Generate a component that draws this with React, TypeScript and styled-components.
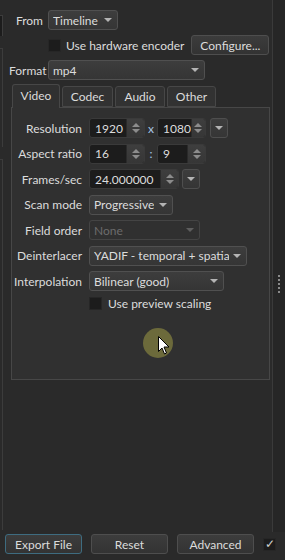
import styled, { createGlobalStyle } from 'styled-components';

const GlobalStyle = createGlobalStyle`
  html, body {
    margin: 0;
    padding: 0;
    background: #2a2a2a;
  }
  body {
    font-family: Lato, "Noto Sans", sans-serif;
    font-size: 12px;
    color: #dcdcdc;
  }
`

const Screen = styled.div`
  width: 285px;
  height: 560px;
  display: flex;
  flex-direction: column;
  background: #2a2a2a;
  position: relative;
  overflow: hidden;
  white-space: nowrap;
`

const Body = styled.div`
  flex: 1;
  display: flex;
`

const LeftStrip = styled.div`
  width: 3px;
  display: flex;
  flex-direction: column;
  padding-top: 15px;
  gap: 12px;
`

const StripPiece = styled.div<{ $h: number; $dark?: boolean }>`
  height: ${p => p.$h}px;
  border-right: 1px solid #3c3c3c;
  border-top: 1px solid #3c3c3c;
  background: ${p => (p.$dark ? '#1c1c1c' : 'transparent')};
`

const Main = styled.div`
  flex: 1;
  display: flex;
  flex-direction: column;
  padding: 10px 0 0 6px;
`

const RightStrip = styled.div`
  width: 12px;
  border-left: 1px solid #3a3a3a;
  background: #262626;
  display: flex;
  flex-direction: column;
  align-items: center;
  padding-top: 275px;
  gap: 2px;
`

const Dot = styled.div`
  width: 2px;
  height: 2px;
  background: #8a8a8a;
`

const Row = styled.div<{ $indent?: number; $mt?: number }>`
  display: flex;
  align-items: center;
  gap: 5px;
  padding-left: ${p => p.$indent ?? 0}px;
  margin-top: ${p => p.$mt ?? 0}px;
`

const TopLabel = styled.span`
  width: 34px;
  text-align: right;
`

const Combo = styled.div<{ $w: number; $disabled?: boolean }>`
  width: ${p => p.$w}px;
  height: 20px;
  box-sizing: border-box;
  border: 1px solid #505050;
  border-radius: 3px;
  background: linear-gradient(#3d3d3d, #353535);
  display: flex;
  align-items: center;
  justify-content: space-between;
  padding: 0 5px 0 4px;
  color: ${p => (p.$disabled ? '#6c6c6c' : '#dcdcdc')};
  ${p => p.$disabled && 'background: #303030; border-color: #444;'}
  overflow: hidden;
`

const ComboText = styled.span`
  overflow: hidden;
`

const Arrow = styled.span<{ $dim?: boolean }>`
  flex: none;
  margin-left: 4px;
  width: 0;
  height: 0;
  border-left: 4px solid transparent;
  border-right: 4px solid transparent;
  border-top: 4px solid ${p => (p.$dim ? '#5e5e5e' : '#b4b4b4')};
`

const Check = styled.div`
  width: 13px;
  height: 13px;
  box-sizing: border-box;
  background: #1c1c1c;
  border: 1px solid #262626;
  display: flex;
  align-items: center;
  justify-content: center;
  color: #cfcfcf;
  font-size: 12px;
  line-height: 1;
`

const Button = styled.div<{ $w: number; $focus?: boolean }>`
  width: ${p => p.$w}px;
  height: 20px;
  box-sizing: border-box;
  border: 1px solid ${p => (p.$focus ? '#3e6c80' : '#4e4e4e')};
  border-radius: 3px;
  background: linear-gradient(#3c3c3c, #333);
  display: flex;
  align-items: center;
  justify-content: center;
`

const Tabs = styled.div`
  display: flex;
  align-items: flex-end;
  gap: 2px;
  margin-top: 3px;
  padding-left: 3px;
  height: 24px;
`

const Tab = styled.div<{ $active?: boolean; $w: number }>`
  width: ${p => p.$w}px;
  height: ${p => (p.$active ? 24 : 21)}px;
  box-sizing: border-box;
  border: 1px solid #474747;
  border-bottom: ${p => (p.$active ? 'none' : '1px solid #474747')};
  border-radius: 3px 3px 0 0;
  background: ${p => (p.$active ? '#303030' : '#323232')};
  display: flex;
  align-items: center;
  justify-content: center;
  padding-bottom: ${p => (p.$active ? 2 : 0)}px;
  position: relative;
  z-index: ${p => (p.$active ? 1 : 0)};
  margin-bottom: ${p => (p.$active ? -1 : 0)}px;
`

const Panel = styled.div`
  margin-left: 2px;
  width: 259px;
  height: 273px;
  box-sizing: border-box;
  border: 1px solid #474747;
  background: #303030;
  display: grid;
  grid-template-columns: 70px 1fr;
  grid-auto-rows: 20px;
  column-gap: 7px;
  row-gap: 5.5px;
  align-content: start;
  align-items: center;
  padding-top: 10px;
`

const FieldLabel = styled.span`
  text-align: right;
`

const Controls = styled.div<{ $mt?: number }>`
  display: flex;
  align-items: center;
  gap: 3px;
  margin-top: ${p => p.$mt ?? 0}px;
`

const Spin = styled.div<{ $w: number }>`
  width: ${p => p.$w}px;
  height: 20px;
  box-sizing: border-box;
  border: 1px solid #3a3a3a;
  border-radius: 3px;
  background: #1c1c1c;
  display: flex;
  overflow: hidden;
`

const SpinValue = styled.span`
  flex: 1;
  padding-left: 5px;
  display: flex;
  align-items: center;
`

const SpinButtons = styled.div`
  width: 17px;
  background: linear-gradient(#3e3e3e, #363636);
  border-left: 1px solid #2a2a2a;
  display: flex;
  flex-direction: column;
  align-items: center;
  justify-content: center;
  gap: 2px;
`

const Tri = styled.span<{ $up?: boolean }>`
  width: 0;
  height: 0;
  border-left: 4px solid transparent;
  border-right: 4px solid transparent;
  ${p => (p.$up ? 'border-bottom' : 'border-top')}: 4px solid #8c8c8c;
`

const Sep = styled.span`
  width: 6px;
  text-align: center;
  color: #a8c8e8;
`

const DropBtn = styled.div`
  width: 18px;
  height: 20px;
  box-sizing: border-box;
  border: 1px solid #4e4e4e;
  border-radius: 3px;
  background: linear-gradient(#3d3d3d, #353535);
  display: flex;
  align-items: center;
  justify-content: center;
`

const Footer = styled.div`
  display: flex;
  align-items: center;
  gap: 9px;
  padding: 0 0 4px 5px;
  height: 24px;
`

const Cursor = styled.div`
  position: absolute;
  left: 143px;
  top: 328px;
  width: 30px;
  height: 30px;
  border-radius: 50%;
  background: #6c6a3b;
`

const Pointer = styled.svg`
  position: absolute;
  left: 158px;
  top: 336px;
`

function SpinBox({ w, value }: { w: number; value: string }) {
  return (
    <Spin $w={w}>
      <SpinValue>{value}</SpinValue>
      <SpinButtons>
        <Tri $up />
        <Tri />
      </SpinButtons>
    </Spin>
  );
}

function Select({ w, value, disabled }: { w: number; value: string; disabled?: boolean }) {
  return (
    <Combo $w={w} $disabled={disabled}>
      <ComboText>{value}</ComboText>
      <Arrow $dim={disabled} />
    </Combo>
  );
}

export default function App() {
  return (
    <Screen>
      <GlobalStyle />
      <Body>
        <LeftStrip>
          <StripPiece $h={20} $dark />
          <StripPiece $h={98} />
          <StripPiece $h={370} />
        </LeftStrip>
        <Main>
          <Row>
            <TopLabel>From</TopLabel>
            <Select w={70} value="Timeline" />
          </Row>
          <Row $indent={39} $mt={5}>
            <Check />
            <span>Use hardware encoder</span>
            <Button $w={78} style={{ marginLeft: 2 }}>Configure...</Button>
          </Row>
          <Row $mt={5}>
            <TopLabel>Format</TopLabel>
            <Select w={157} value="mp4" />
          </Row>
          <Tabs>
            <Tab $active $w={48}>Video</Tab>
            <Tab $w={51}>Codec</Tab>
            <Tab $w={50}>Audio</Tab>
            <Tab $w={49}>Other</Tab>
          </Tabs>
          <Panel>
            <FieldLabel>Resolution</FieldLabel>
            <Controls>
              <SpinBox w={56} value="1920" />
              <Sep>x</Sep>
              <SpinBox w={49} value="1080" />
              <DropBtn style={{ marginLeft: 1 }}><Arrow style={{ marginLeft: 0 }} /></DropBtn>
            </Controls>

            <FieldLabel>Aspect ratio</FieldLabel>
            <Controls>
              <SpinBox w={56} value="16" />
              <Sep>:</Sep>
              <SpinBox w={49} value="9" />
            </Controls>

            <FieldLabel>Frames/sec</FieldLabel>
            <Controls>
              <SpinBox w={90} value="24.000000" />
              <DropBtn><Arrow style={{ marginLeft: 0 }} /></DropBtn>
            </Controls>

            <FieldLabel>Scan mode</FieldLabel>
            <Controls><Select w={84} value="Progressive" /></Controls>

            <FieldLabel>Field order</FieldLabel>
            <Controls><Select w={111} value="None" disabled /></Controls>

            <FieldLabel>Deinterlacer</FieldLabel>
            <Controls><Select w={158} value="YADIF - temporal + spatial (best)" /></Controls>

            <FieldLabel>Interpolation</FieldLabel>
            <Controls><Select w={135} value="Bilinear (good)" /></Controls>

            <span />
            <Controls $mt={-6} style={{ gap: 6 }}>
              <Check />
              <span>Use preview scaling</span>
            </Controls>
          </Panel>
        </Main>
        <RightStrip>
          <Dot /><Dot /><Dot /><Dot /><Dot />
        </RightStrip>
      </Body>
      <Footer>
        <Button $w={77} $focus>Export File</Button>
        <Button $w={77}>Reset</Button>
        <Button $w={77}>Advanced</Button>
        <Check>✓</Check>
      </Footer>
      <Cursor />
      <Pointer width="12" height="19" viewBox="0 0 12 19">
        <path d="M0.5 0.5 L0.5 15.5 L4 12 L6.5 18 L8.5 17 L6 11 L11 11 Z" fill="#fff" stroke="#000" strokeWidth="1" />
      </Pointer>
    </Screen>
  );
}
